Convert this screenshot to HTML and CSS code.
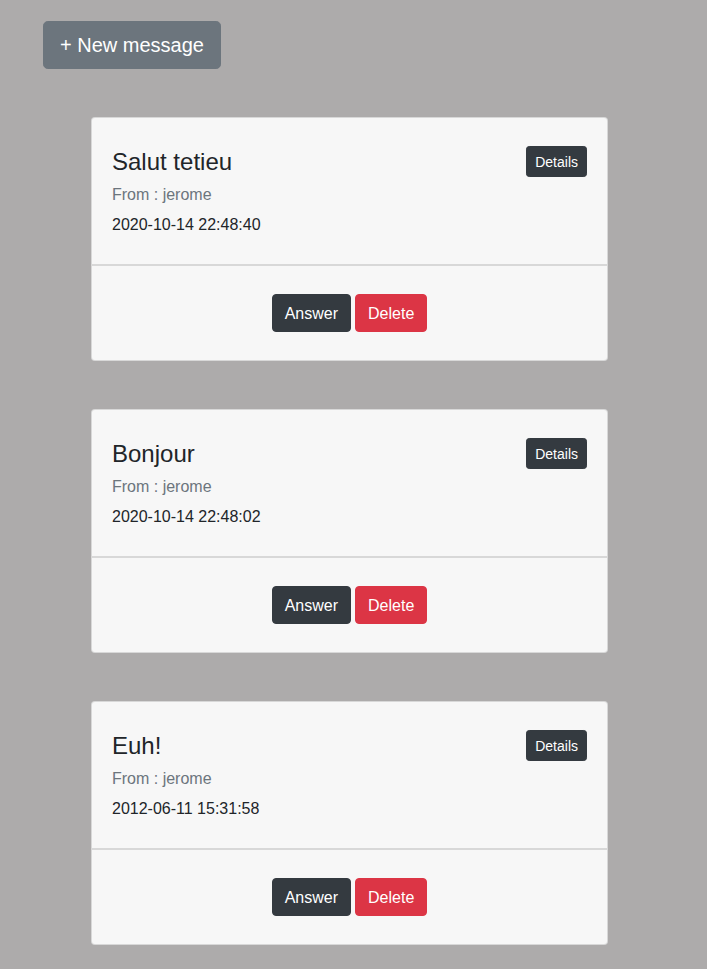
FILE: index.html
```html
<!DOCTYPE html>
<html lang="fr">
<head>
<meta charset="utf-8">
<title>Messages</title>
<link rel="stylesheet" href="styles.css">
</head>
<body>
<div class="page">
  <div class="top">
    <button class="btn btn-lg btn-secondary">+ New message</button>
  </div>
  <div class="list">
    <div class="card">
      <div class="card-body">
        <div class="card-head">
          <h4 class="card-title">Salut tetieu</h4>
          <button class="btn btn-sm btn-dark">Details</button>
        </div>
        <div class="card-subtitle">From : jerome</div>
        <div class="card-date">2020-10-14 22:48:40</div>
      </div>
      <div class="card-footer">
        <button class="btn btn-dark">Answer</button>
        <button class="btn btn-danger">Delete</button>
      </div>
    </div>
    <div class="card">
      <div class="card-body">
        <div class="card-head">
          <h4 class="card-title">Bonjour</h4>
          <button class="btn btn-sm btn-dark">Details</button>
        </div>
        <div class="card-subtitle">From : jerome</div>
        <div class="card-date">2020-10-14 22:48:02</div>
      </div>
      <div class="card-footer">
        <button class="btn btn-dark">Answer</button>
        <button class="btn btn-danger">Delete</button>
      </div>
    </div>
    <div class="card">
      <div class="card-body">
        <div class="card-head">
          <h4 class="card-title">Euh!</h4>
          <button class="btn btn-sm btn-dark">Details</button>
        </div>
        <div class="card-subtitle">From : jerome</div>
        <div class="card-date">2012-06-11 15:31:58</div>
      </div>
      <div class="card-footer">
        <button class="btn btn-dark">Answer</button>
        <button class="btn btn-danger">Delete</button>
      </div>
    </div>
  </div>
</div>
</body>
</html>
```
FILE: styles.css
```css
* { box-sizing: border-box; }
html, body {
  margin: 0;
  padding: 0;
  background: #adabab;
  font-family: "Liberation Sans", Arial, sans-serif;
  font-size: 16px;
  line-height: 1.5;
  color: #212529;
}
.page {
  padding: 21px 0 24px 43px;
}
.top {
  display: flex;
}
.btn {
  display: inline-block;
  font-family: inherit;
  font-size: 16px;
  line-height: 24px;
  padding: 7px 12px 5px;
  border: 1px solid transparent;
  border-radius: 4px;
  color: #fff;
  cursor: pointer;
  margin: 0;
}
.btn-lg {
  font-size: 20px;
  line-height: 30px;
  padding: 8px 16px;
  border-radius: 4.8px;
}
.btn-sm {
  font-size: 14px;
  line-height: 21px;
  padding: 5px 8px 3px;
  border-radius: 3.2px;
}
.btn-secondary { background: #6c757d; border-color: #6c757d; }
.btn-dark { background: #343a40; border-color: #343a40; }
.btn-danger { background: #dc3545; border-color: #dc3545; }

.list {
  display: flex;
  flex-direction: column;
  gap: 48px;
  margin-top: 48px;
  margin-left: 48px;
  width: 517px;
}
.card {
  background: #f7f7f7;
  border: 1px solid rgba(0, 0, 0, 0.125);
  border-radius: 4px;
  overflow: hidden;
}
.card-body {
  padding: 28px 20px 27px;
  border-bottom: 1px solid rgba(0, 0, 0, 0.125);
}
.card-head {
  display: flex;
  justify-content: space-between;
  align-items: flex-start;
}
.card-title {
  margin: 2px 0 6.2px 0;
  font-size: 24px;
  line-height: 28.8px;
  font-weight: 500;
  color: #212529;
}
.card-subtitle {
  color: #6c757d;
  margin-bottom: 6px;
}
.card-date {
  color: #212529;
}
.card-footer {
  border-top: 1px solid rgba(0, 0, 0, 0.125);
  padding: 28px 20px;
  display: flex;
  justify-content: center;
  gap: 4px;
}
```
